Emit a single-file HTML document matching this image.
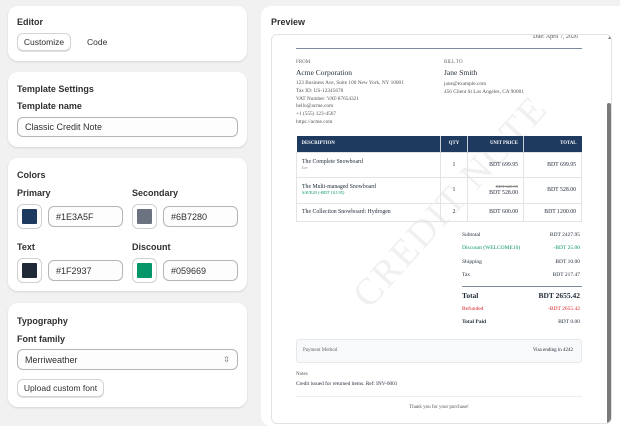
<!DOCTYPE html>
<html><head><style>
*{box-sizing:border-box;margin:0;padding:0}
body{width:620px;height:413px;overflow:hidden;background:#f1f1f1;font-family:"Liberation Sans",sans-serif;color:#303030;position:relative}
.card{position:absolute;left:8px;width:239px;background:#fff;border-radius:10px;box-shadow:0 1px 2px rgba(0,0,0,.12)}
.a{position:absolute;white-space:nowrap}
.h{font-size:9px;font-weight:600;color:#303030}
.lbl{font-size:9px;font-weight:700;color:#303030}
.inp{position:absolute;border:1px solid #b5b5b5;border-radius:6px;background:#fdfdfd;font-size:9px;color:#303030;padding-left:7px;display:flex;align-items:center}
.sw{position:absolute;width:25px;height:25px;border:1px solid #d0d0d0;border-radius:6px;background:#fff}
.sw i{position:absolute;left:4px;top:4px;width:15px;height:15px;border-radius:1px}
.btn{position:absolute;border:1px solid #d3d3d3;border-radius:6px;background:#fff;box-shadow:0 1px 0 rgba(0,0,0,.12);font-size:8.5px;display:flex;align-items:center;justify-content:center}
.s{font-family:"Liberation Serif",serif;color:#1f2937}
.inv .a{font-family:"Liberation Serif",serif}
</style></head><body>
<div class="card" style="top:6px;height:55px">
 <div class="a h" style="left:9px;top:11px">Editor</div>
 <div class="btn" style="left:9px;top:27px;width:54px;height:18px">Customize</div>
 <div class="a" style="left:79px;top:31px;font-size:8.5px">Code</div>
</div>
<div class="card" style="top:72px;height:75px">
 <div class="a h" style="left:9px;top:12px">Template Settings</div>
 <div class="a lbl" style="left:9px;top:29px">Template name</div>
 <div class="inp" style="left:9px;top:45px;width:221px;height:20px">Classic Credit Note</div>
</div>
<div class="card" style="top:158px;height:133px">
 <div class="a h" style="left:9px;top:12px">Colors</div>
 <div class="a lbl" style="left:9px;top:30px">Primary</div>
 <div class="a lbl" style="left:124px;top:30px">Secondary</div>
 <div class="sw" style="left:9px;top:46px"><i style="background:#1e3a5f"></i></div>
 <div class="inp" style="left:40px;top:48px;width:75px;height:21px">#1E3A5F</div>
 <div class="sw" style="left:124px;top:46px"><i style="background:#6b7280"></i></div>
 <div class="inp" style="left:155px;top:48px;width:75px;height:21px">#6B7280</div>
 <div class="a lbl" style="left:9px;top:84px">Text</div>
 <div class="a lbl" style="left:124px;top:84px">Discount</div>
 <div class="sw" style="left:9px;top:100px"><i style="background:#1f2937"></i></div>
 <div class="inp" style="left:40px;top:102px;width:75px;height:21px">#1F2937</div>
 <div class="sw" style="left:124px;top:100px"><i style="background:#059669"></i></div>
 <div class="inp" style="left:155px;top:102px;width:75px;height:21px">#059669</div>
</div>
<div class="card" style="top:303px;height:104px">
 <div class="a h" style="left:9px;top:13px">Typography</div>
 <div class="a lbl" style="left:9px;top:31px">Font family</div>
 <div class="inp" style="left:9px;top:46px;width:221px;height:21px">Merriweather<span style="position:absolute;right:7px;font-size:8px;color:#666">&#8691;</span></div>
 <div class="btn" style="left:9px;top:76px;width:87px;height:18px">Upload custom font</div>
</div>

<div style="position:absolute;left:261px;top:6px;width:370px;height:420px;background:#fff;border-radius:10px"></div>
<div class="a h" style="left:271px;top:17px">Preview</div>
<div class="inv" style="position:absolute;left:271px;top:34px;width:341px;height:390px;border:1px solid #e3e3e3;border-radius:6px;background:#fff;overflow:hidden">
 <div style="position:absolute;left:335px;top:68px;width:4px;height:330px;background:#7a7a7a;border-radius:2px"></div>
 <div class="a" style="left:335px;top:0;font-size:6px;color:#777">&#9650;</div>
 <div class="a" style="left:72px;top:252px;font-size:38px;color:#f0f0f0;transform:rotate(-48deg);transform-origin:left top;letter-spacing:2px;font-family:'Liberation Serif',serif">CREDIT NOTE</div>
 <div class="a" style="right:33px;top:-1px;font-size:6px;color:#555">Due: April 7, 2026</div>
 <div style="position:absolute;left:24px;top:13px;width:286px;height:1px;background:#7a8aa0"></div>
 <div class="a" style="left:24px;top:25px;font-size:5px;color:#666">FROM</div>
 <div class="a" style="left:172px;top:25px;font-size:5px;color:#666">BILL TO</div>
 <div class="a s" style="left:24px;top:33px;font-size:7.5px">Acme Corporation</div>
 <div class="a s" style="left:172px;top:33px;font-size:7.5px">Jane Smith</div>
 <div class="a" style="left:24px;top:45px;font-size:5.3px;color:#555;line-height:7.8px">123 Business Ave, Suite 100 New York, NY 10001<br>Tax ID: US-12345678<br>VAT Number: VAT-87654321<br>hello@acme.com<br>+1 (555) 123-4567<br>https://acme.com</div>
 <div class="a" style="left:172px;top:45px;font-size:5.3px;color:#555;line-height:8.3px">jane@example.com<br>456 Client St Los Angeles, CA 90001</div>
 <table style="position:absolute;left:24px;top:101px;width:286px;border-collapse:collapse;font-family:'Liberation Serif',serif;font-size:5.8px;color:#1f2937">
  <tr style="background:#1e3a5f;color:#fff;font-size:4.8px;font-weight:bold;height:16px"><td style="padding-left:5px;width:144px">DESCRIPTION</td><td style="text-align:center;width:27px;border-left:1px solid #c8cdd5">QTY</td><td style="text-align:right;padding-right:5px;width:56px;border-left:1px solid #c8cdd5">UNIT PRICE</td><td style="text-align:right;padding-right:5px;border-left:1px solid #c8cdd5">TOTAL</td></tr>
  <tr style="height:25px;border:1px solid #e3e3e3"><td style="padding-left:5px">The Complete Snowboard<br><span style="font-size:4.5px;color:#888">Ice</span></td><td style="text-align:center;border-left:1px solid #e3e3e3">1</td><td style="text-align:right;padding-right:5px;border-left:1px solid #e3e3e3">BDT 699.95</td><td style="text-align:right;padding-right:5px;border-left:1px solid #e3e3e3">BDT 699.95</td></tr>
  <tr style="height:26px;border:1px solid #e3e3e3"><td style="padding-left:5px">The Multi-managed Snowboard<br><i style="font-size:4.5px;color:#059669">SAVE20 (-BDT 101.95)</i></td><td style="text-align:center;border-left:1px solid #e3e3e3">1</td><td style="text-align:right;padding-right:5px;border-left:1px solid #e3e3e3"><s style="font-size:4.5px;color:#888">BDT 629.95</s><br>BDT 528.00</td><td style="text-align:right;padding-right:5px;border-left:1px solid #e3e3e3">BDT 528.00</td></tr>
  <tr style="height:18px;border:1px solid #e3e3e3"><td style="padding-left:5px">The Collection Snowboard: Hydrogen</td><td style="text-align:center;border-left:1px solid #e3e3e3">2</td><td style="text-align:right;padding-right:5px;border-left:1px solid #e3e3e3">BDT 600.00</td><td style="text-align:right;padding-right:5px;border-left:1px solid #e3e3e3">BDT 1200.00</td></tr>
 </table>
 <div class="a" style="left:190px;top:197px;font-size:5.5px;color:#1f2937">Subtotal</div><div class="a" style="right:31px;top:197px;font-size:5.5px;color:#1f2937">BDT 2427.95</div>
 <div class="a" style="left:190px;top:210px;font-size:5.5px;color:#059669">Discount (WELCOME10)</div><div class="a" style="right:31px;top:210px;font-size:5.5px;color:#059669">-BDT 25.00</div>
 <div class="a" style="left:190px;top:224px;font-size:5.5px;color:#1f2937">Shipping</div><div class="a" style="right:31px;top:224px;font-size:5.5px;color:#1f2937">BDT 10.00</div>
 <div class="a" style="left:190px;top:237px;font-size:5.5px;color:#1f2937">Tax</div><div class="a" style="right:31px;top:237px;font-size:5.5px;color:#1f2937">BDT 217.47</div>
 <div style="position:absolute;left:190px;top:251px;width:120px;height:1px;background:#7a8aa0"></div>
 <div class="a" style="left:190px;top:256px;font-size:7.5px;font-weight:bold;color:#1f2937">Total</div><div class="a" style="right:31px;top:256px;font-size:7.5px;font-weight:bold;color:#1f2937">BDT 2655.42</div>
 <div class="a" style="left:190px;top:271px;font-size:5.5px;color:#dc2626">Refunded</div><div class="a" style="right:31px;top:271px;font-size:5.5px;color:#dc2626">-BDT 2655.42</div>
 <div class="a" style="left:190px;top:284px;font-size:5.5px;font-weight:bold;color:#1f2937">Total Paid</div><div class="a" style="right:31px;top:284px;font-size:5.5px;color:#1f2937">BDT 0.00</div>
 <div style="position:absolute;left:24px;top:304px;width:286px;height:24px;background:#f8f9fa;border:1px solid #e5e7eb;border-radius:3px"></div>
 <div class="a" style="left:31px;top:313px;font-size:5px;color:#666">Payment Method</div>
 <div class="a" style="right:38px;top:313px;font-size:5px;color:#1f2937">Visa ending in 4242</div>
 <div class="a" style="left:24px;top:337px;font-size:5px;color:#555">Notes</div>
 <div class="a" style="left:24px;top:346px;font-size:5.3px;color:#1f2937">Credit issued for returned items. Ref: INV-0001</div>
 <div style="position:absolute;left:24px;top:361px;width:286px;height:1px;background:#eee"></div>
 <div class="a" style="left:24px;width:286px;text-align:center;top:370px;font-size:5px;color:#555">Thank you for your purchase!</div>
</div>
</body></html>
